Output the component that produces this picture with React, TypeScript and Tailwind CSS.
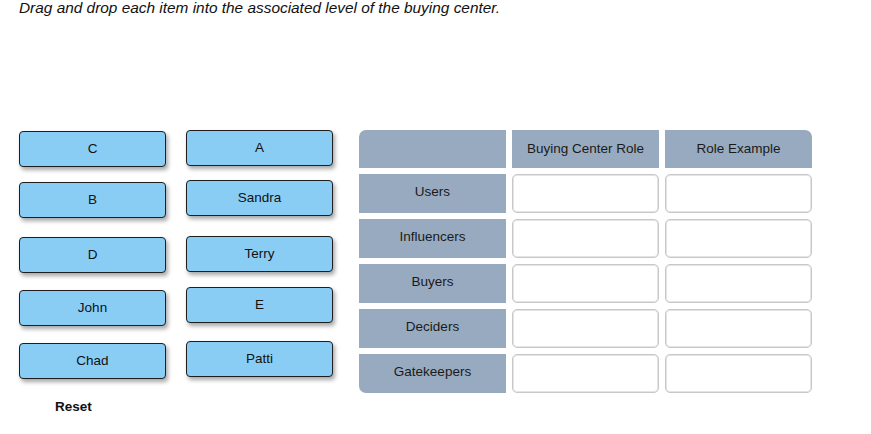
import React from 'react';

const leftItems = [
  { label: 'C', mt: 'mt-[1px]' },
  { label: 'B', mt: 'mt-[15px]' },
  { label: 'D', mt: 'mt-[19px]' },
  { label: 'John', mt: 'mt-[17px]' },
  { label: 'Chad', mt: 'mt-[17px]' },
];

const rightItems = [
  { label: 'A', mt: 'mt-0' },
  { label: 'Sandra', mt: 'mt-[14px]' },
  { label: 'Terry', mt: 'mt-[20px]' },
  { label: 'E', mt: 'mt-[15px]' },
  { label: 'Patti', mt: 'mt-[18px]' },
];

const levels = ['Users', 'Influencers', 'Buyers', 'Deciders', 'Gatekeepers'];

function Item({ label, mt }: { label: string; mt: string }) {
  return (
    <div
      className={`${mt} h-[36px] w-[147px] rounded-[4px] border border-[#1e1e1e] bg-[#89cdf5] flex items-center justify-center pt-[1px] text-[13.5px] text-[#111] shadow-[2px_3px_4px_rgba(0,0,0,0.35)]`}
    >
      {label}
    </div>
  );
}

function DropBox() {
  return (
    <div className="h-[39px] rounded-[5px] border border-[#c8c8c8] bg-white shadow-[inset_0_0_0_1px_#e4e4e4]" />
  );
}

export default function App() {
  return (
    <div className="w-[871px] h-[434px] bg-white text-[#111] font-['Liberation_Sans',Arial,sans-serif]">
      <p className="pl-[19px] text-[15.4px] leading-[15px] italic">
        Drag and drop each item into the associated level of the buying center.
      </p>

      <div className="mt-[115px] flex items-start">
        <div className="ml-[19px] flex flex-col">
          {leftItems.map((it) => (
            <Item key={it.label} {...it} />
          ))}
          <div className="mt-[21px] ml-[36px] text-[13.5px] leading-[14px] font-bold">Reset</div>
        </div>

        <div className="ml-[20px] flex flex-col">
          {rightItems.map((it) => (
            <Item key={it.label} {...it} />
          ))}
        </div>

        <div className="ml-[26px] grid grid-cols-[147px_147px_147px] gap-x-[6px] gap-y-[6px] text-[13.5px] text-[#1a1a1a]">
          <div className="h-[38px] rounded-tl-[7px] bg-[#98aac0]" />
          <div className="h-[38px] bg-[#98aac0] flex items-center justify-center">Buying Center Role</div>
          <div className="h-[38px] rounded-tr-[7px] bg-[#98aac0] flex items-center justify-center">Role Example</div>

          {levels.map((lv, i) => (
            <React.Fragment key={lv}>
              <div
                className={`h-[39px] bg-[#98aac0] flex items-center justify-center pb-[2px] ${
                  i === levels.length - 1 ? 'rounded-bl-[7px]' : ''
                }`}
              >
                {lv}
              </div>
              <DropBox />
              <DropBox />
            </React.Fragment>
          ))}
        </div>
      </div>
    </div>
  );
}
